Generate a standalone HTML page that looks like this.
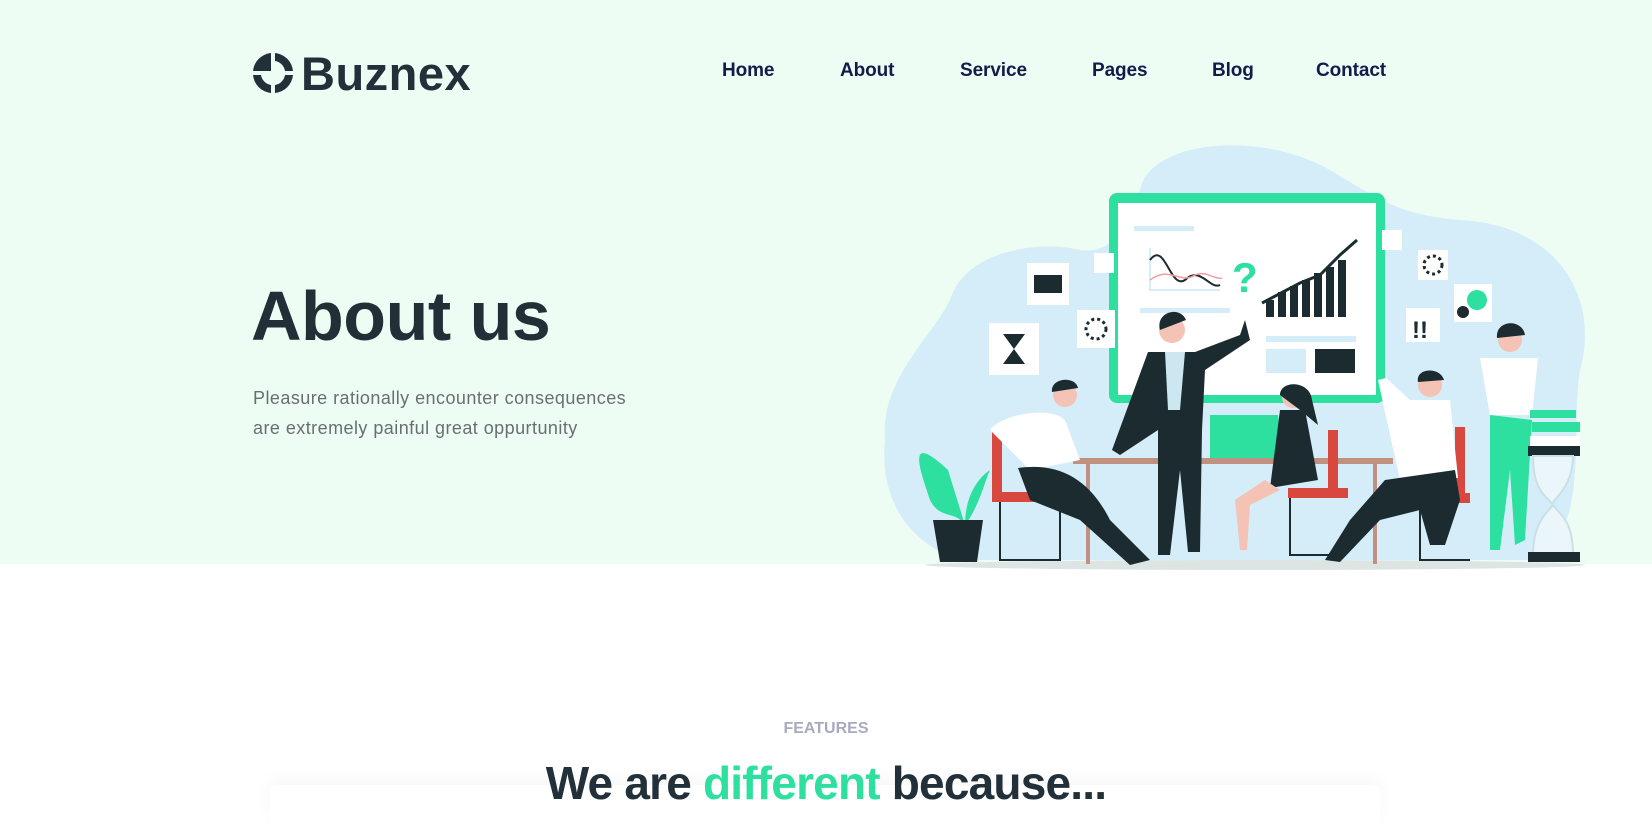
<!DOCTYPE html>
<html><head><meta charset="utf-8"><style>
*{margin:0;padding:0;box-sizing:border-box}
body{width:1652px;height:798px;overflow:hidden;background:#fff;font-family:"Liberation Sans",sans-serif;position:relative}
.hero{position:absolute;left:0;top:0;width:1652px;height:564px;background:#edfdf3}
.abs{position:absolute;white-space:nowrap}
.nav{top:60px;font-size:19px;font-weight:bold;color:#141b4b;letter-spacing:-0.1px}
</style></head><body>
<div class="hero"></div>
<div class="abs" style="left:270px;top:785px;width:1110px;height:40px;background:#fff;border-radius:6px;box-shadow:0 -6px 18px rgba(0,0,0,0.035)"></div>
<svg class="abs" style="left:252px;top:52px" width="42" height="42" viewBox="0 0 42 42">
<path d="M19 1 A20 20 0 0 0 1 19 L19 19 Z" fill="#22303a"/>
<path d="M23 1 A20 20 0 0 1 41 19 L33 19 A12 12 0 0 0 23 9 Z" fill="#22303a"/>
<path d="M41 23 A20 20 0 0 1 23 41 L23 33 A12 12 0 0 0 33 23 Z" fill="#22303a"/>
<path d="M19 41 A20 20 0 0 1 1 23 L9 23 A12 12 0 0 0 19 33 Z" fill="#22303a"/>
</svg>
<div class="abs" style="left:301px;top:46px;font-size:47px;font-weight:bold;color:#22303a;letter-spacing:0.5px">Buznex</div>
<div class="abs nav" style="left:722px">Home</div>
<div class="abs nav" style="left:840px">About</div>
<div class="abs nav" style="left:960px">Service</div>
<div class="abs nav" style="left:1092px">Pages</div>
<div class="abs nav" style="left:1212px">Blog</div>
<div class="abs nav" style="left:1316px">Contact</div>
<div class="abs" style="left:251px;top:276px;font-size:70px;font-weight:bold;color:#222f36;letter-spacing:-0.5px">About us</div>
<div class="abs" style="left:253px;top:383px;font-size:18px;line-height:30px;color:#6a6e74;letter-spacing:0.45px">Pleasure rationally encounter consequences<br>are extremely painful great oppurtunity</div>

<svg class="abs" style="left:0;top:0" width="1652" height="570" viewBox="0 0 1652 570">
<path d="M1140 190 C1150 140 1260 130 1330 170 C1380 200 1400 215 1460 220 C1560 225 1600 300 1580 370 C1570 430 1590 520 1540 560 L960 560 C900 540 880 490 885 440 C880 380 930 340 950 300 C965 250 1040 240 1080 250 C1120 255 1130 215 1140 190 Z" fill="#d5edf8"/>
<ellipse cx="1255" cy="565" rx="330" ry="5" fill="#dde4e4"/>
<rect x="1109" y="193" width="276" height="210" rx="8" fill="#2ee0a0"/>
<rect x="1118" y="203" width="258" height="192" fill="#fff"/>
<rect x="1134" y="226" width="60" height="5" fill="#d5edf8"/>
<path d="M1150 248 L1150 290 L1220 290" stroke="#d5edf8" stroke-width="2" fill="none"/>
<path d="M1150 260 C1165 240 1170 290 1185 280 C1200 265 1210 290 1220 285" stroke="#1b2b30" stroke-width="2" fill="none"/>
<path d="M1150 280 C1170 265 1180 285 1195 275 C1205 270 1215 280 1222 278" stroke="#f0a0a0" stroke-width="1.5" fill="none"/>
<text x="1232" y="292" font-size="42" font-weight="bold" fill="#2ee0a0" font-family="Liberation Sans">?</text>
<path d="M1262 303 L1300 283 L1320 275 L1340 255 L1357 240" stroke="#1b2b30" stroke-width="3" fill="none"/>
<g fill="#1b2b30"><rect x="1266" y="300" width="8" height="17"/><rect x="1278" y="292" width="8" height="25"/><rect x="1290" y="286" width="8" height="31"/><rect x="1302" y="280" width="8" height="37"/><rect x="1314" y="273" width="8" height="44"/><rect x="1326" y="267" width="8" height="50"/><rect x="1338" y="260" width="8" height="57"/></g>
<rect x="1266" y="336" width="90" height="6" fill="#d5edf8"/>
<rect x="1266" y="349" width="40" height="24" fill="#d5edf8"/><rect x="1315" y="349" width="40" height="24" fill="#1b2b30"/>
<rect x="1140" y="308" width="90" height="5" fill="#d5edf8"/>
<g fill="#fff"><rect x="1027" y="263" width="42" height="42"/><rect x="989" y="323" width="50" height="52"/><rect x="1077" y="310" width="38" height="38"/><rect x="1094" y="253" width="20" height="20"/><rect x="1382" y="230" width="20" height="20"/><rect x="1418" y="250" width="30" height="30"/><rect x="1454" y="284" width="38" height="38"/><rect x="1406" y="308" width="34" height="34"/></g>
<rect x="1034" y="275" width="28" height="18" fill="#1b2b30"/>
<circle cx="1096" cy="329" r="10" fill="none" stroke="#1b2b30" stroke-width="3" stroke-dasharray="3 3"/>
<circle cx="1433" cy="265" r="9" fill="none" stroke="#1b2b30" stroke-width="3" stroke-dasharray="3 3"/>
<circle cx="1477" cy="300" r="10" fill="#2ee0a0"/><circle cx="1463" cy="312" r="6" fill="#1b2b30"/>
<path d="M1003 334 L1025 334 L1003 364 L1025 364 Z" fill="#1b2b30"/>
<text x="1412" y="338" font-size="24" font-weight="bold" fill="#1b2b30" font-family="Liberation Sans">!!</text>
<rect x="1073" y="458" width="320" height="6" fill="#c09080"/>
<rect x="1086" y="464" width="4" height="100" fill="#c09080"/><rect x="1373" y="464" width="4" height="100" fill="#c09080"/>
<path d="M1210 415 L1278 415 L1283 458 L1210 458 Z" fill="#2ee0a0"/>
<g fill="#d8483e"><rect x="992" y="430" width="10" height="65"/><rect x="992" y="492" width="70" height="10"/><rect x="1328" y="430" width="10" height="65"/><rect x="1288" y="488" width="60" height="10"/><rect x="1455" y="427" width="10" height="70"/><rect x="1415" y="493" width="55" height="10"/></g>
<g stroke="#1b2b30" stroke-width="2" fill="none"><path d="M1000 502 L1000 560 L1060 560 L1060 502"/><path d="M1290 498 L1290 555 L1340 555"/><path d="M1420 503 L1420 560 L1470 560"/></g>
<path d="M990 430 C1000 415 1050 405 1065 420 L1080 460 L1030 470 Z" fill="#fff"/>
<circle cx="1065" cy="395" r="12" fill="#f4c3b5"/><path d="M1052 392 C1050 378 1075 375 1078 388 Z" fill="#1b2b30"/>
<path d="M1018 468 C1060 462 1090 480 1110 520 L1150 560 L1130 565 L1080 520 L1030 500 Z" fill="#1b2b30"/>
<circle cx="1172" cy="330" r="13" fill="#f4c3b5"/><path d="M1160 330 C1155 312 1180 305 1186 320 Z" fill="#1b2b30"/>
<path d="M1148 352 L1195 352 L1240 335 L1245 320 L1250 340 L1205 370 L1202 430 L1200 552 L1188 552 L1180 470 L1170 555 L1158 555 L1158 430 L1120 455 L1112 450 Z" fill="#1b2b30"/>
<path d="M1165 352 L1185 352 L1180 410 L1168 410 Z" fill="#cce7f0"/>
<circle cx="1293" cy="397" r="11" fill="#f4c3b5"/><path d="M1280 395 C1280 380 1310 380 1312 400 L1318 425 L1300 410 Z" fill="#1b2b30"/>
<path d="M1280 410 L1305 410 L1318 480 L1270 488 Z" fill="#1b2b30"/>
<path d="M1265 480 L1235 500 L1240 550 L1247 550 L1250 505 L1280 490 Z" fill="#f4c3b5"/>
<circle cx="1430" cy="385" r="12" fill="#f4c3b5"/><path d="M1418 382 C1415 368 1440 366 1444 380 Z" fill="#1b2b30"/>
<path d="M1410 400 L1450 400 L1458 478 L1400 480 L1378 380 L1386 378 Z" fill="#fff"/>
<path d="M1455 470 L1385 480 L1350 520 L1325 560 L1340 562 L1380 520 L1420 510 L1430 545 L1445 545 L1460 500 Z" fill="#1b2b30"/>
<circle cx="1510" cy="340" r="12" fill="#f4c3b5"/><path d="M1497 338 C1495 320 1522 318 1525 335 Z" fill="#1b2b30"/>
<path d="M1480 358 L1538 358 L1532 415 L1490 415 Z" fill="#fff"/>
<path d="M1490 415 L1532 420 L1525 540 L1515 545 L1510 470 L1500 550 L1490 550 Z" fill="#2ee0a0"/>
<g fill="#2ee0a0"><rect x="1530" y="410" width="46" height="8"/><rect x="1532" y="422" width="48" height="10"/></g>
<rect x="1530" y="436" width="50" height="10" fill="#fff"/>
<rect x="1528" y="446" width="52" height="10" fill="#1b2b30"/>
<path d="M1533 456 L1573 456 C1573 490 1550 500 1553 505 C1560 515 1573 520 1573 555 L1533 555 C1533 520 1550 510 1553 505 C1545 495 1533 490 1533 456 Z" fill="#eaf6fa" stroke="#c8e0e6" stroke-width="2"/>
<rect x="1528" y="552" width="52" height="10" fill="#1b2b30"/>
<path d="M948 470 C905 430 920 470 930 500 C940 520 955 510 965 525 Z" fill="#2ee0a0"/>
<path d="M965 525 C980 505 985 480 990 470 C975 480 965 500 965 525 Z" fill="#2ee0a0"/>
<path d="M933 520 L983 520 L977 562 L940 562 Z" fill="#1b2b30"/>
</svg>

<div class="abs" style="left:0;width:1652px;text-align:center;top:720px;font-size:16px;font-weight:bold;color:#a9a9bf">FEATURES</div>
<div class="abs" style="left:0;width:1652px;text-align:center;top:756px;font-size:46px;font-weight:bold;color:#22303a;letter-spacing:-0.8px">We are <span style="color:#2ee0a0">different</span> because...</div>
</body></html>
